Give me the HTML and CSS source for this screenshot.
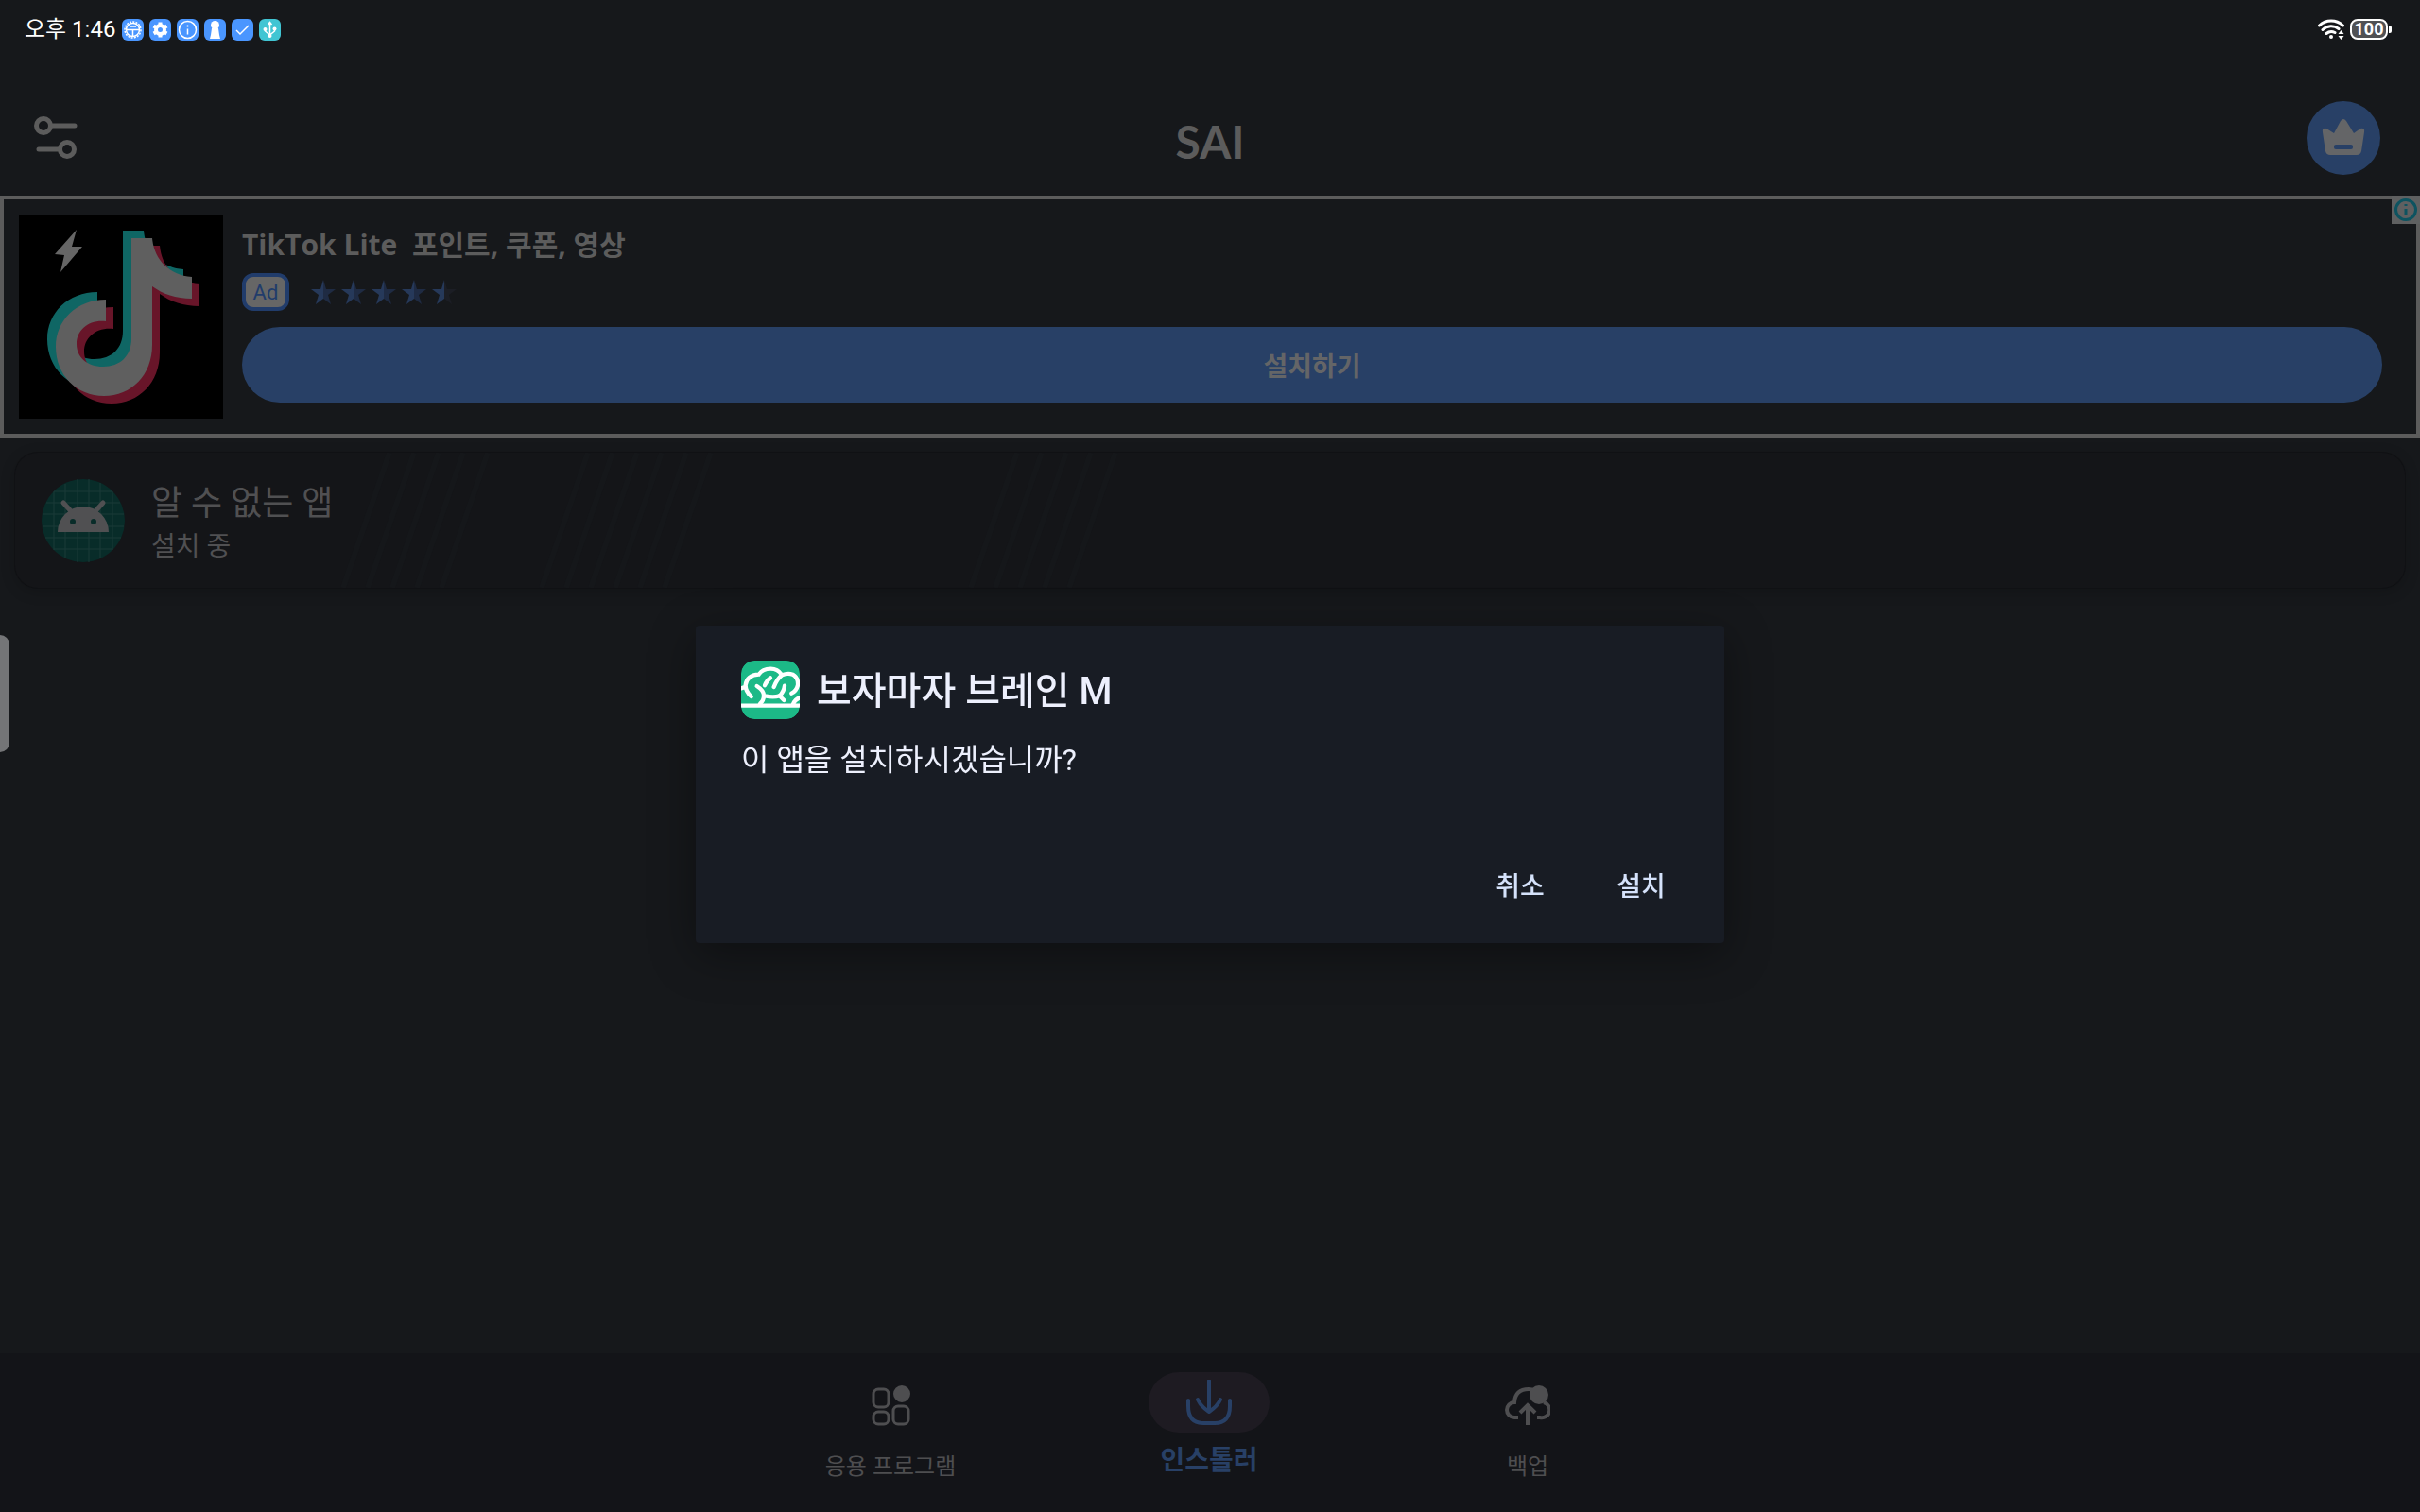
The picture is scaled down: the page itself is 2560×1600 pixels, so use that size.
FILE: index.html
```html
<!doctype html>
<html lang="ko">
<head>
    <meta charset="UTF-8">
    <meta name="viewport" content="width=device-width, initial-scale=1.0">
    <title>SAI</title>
    <link rel="stylesheet" href="styles.css">
</head>
<body>
<div class="statusBar">
    <div class="statusLeft">
        <span class="clock">오후 1:46</span>
        <svg class="chip" viewBox="0 0 23 23"><rect width="23" height="23" rx="6"/><circle cx="11.500" cy="11.500" r="8.500" class="line" stroke-width="2" stroke-dasharray="2 1.300"/><circle cx="11.500" cy="11.500" r="7" class="line"/><path class="line" d="M5 11.500h13M11.500 12v6M8 8h7"/></svg>
        <svg class="chip" viewBox="0 0 23 23"><rect width="23" height="23" rx="6"/><circle cx="11.500" cy="11.500" r="4.500" class="gear"/><path class="gear" d="M11.500 3.500v3M11.500 16.500v3M4.600 7.500l2.600 1.500M15.800 14l2.600 1.500M4.600 15.500l2.600-1.500M15.800 9l2.600-1.500"/></svg>
        <svg class="chip" viewBox="0 0 23 23"><rect width="23" height="23" rx="6"/><circle cx="11.500" cy="11.500" r="9" class="line"/><path class="line" stroke-width="2" d="M11.500 10.500v6M11.500 6.500v2"/></svg>
        <svg class="chip" viewBox="0 0 23 23"><rect width="23" height="23" rx="6"/><circle cx="11.500" cy="6.500" r="4.500" class="solid"/><path class="solid" d="M8 10h7l1 7 1 4H6l1-4z"/></svg>
        <svg class="chip" viewBox="0 0 23 23"><rect width="23" height="23" rx="6"/><path class="line" d="M5 12l4 4 9-9"/></svg>
        <svg class="chip usb" viewBox="0 0 23 23"><rect width="23" height="23" rx="6"/><path class="line" d="M11.500 4v15M6.500 11v2l5 4 5-4v-3M9.500 6l2-2.500 2 2.500"/><circle cx="6.500" cy="11" r="2" class="solid"/><circle cx="16.500" cy="10.500" r="2" class="solid"/><circle cx="11.500" cy="18" r="2" class="solid"/></svg>
    </div>
    <div class="statusRight">
        <svg class="wifi" viewBox="0 0 28 22"><path d="M1.500 7a18 18 0 0 1 25 0M5 11.500a13 13 0 0 1 17-1M9 15.500a8 8 0 0 1 9-1"/><circle cx="14" cy="19" r="2"/><path class="arrows" d="M21.500 16l3-4 3 4zM21.500 18l3 4 3-4z"/></svg>
        <div class="battery">100</div>
    </div>
</div>

<header class="appBar">
    <button class="settings" aria-label="설정">
        <svg viewBox="0 0 46 46"><circle cx="10" cy="10" r="7.500"/><path d="M18 10h25M5 35h22"/><circle cx="35" cy="35" r="7.500"/></svg>
    </button>
    <h1>SAI</h1>
    <button class="premium" aria-label="프리미엄">
        <svg viewBox="0 0 78 78"><path d="M17 33q-1-5 4-4l8 5 7-13q3-4 6 0l8 13 7-5q5-1 4 4l-3 20q-1 4-5 4H25q-4 0-5-4z"/><rect x="29" y="46" width="20" height="5" rx="2" class="slot"/></svg>
    </button>
</header>

<section class="adBanner">
    <svg class="adLogo" viewBox="0 0 216 216">
        <defs>
            <path id="note" d="M119 25h22c2 22 17 39 42 41v23c-17 0-31-5-42-13v62c0 32-22 54-51 54s-51-22-51-52c0-28 22-50 53-50v23c-18-2-31 9-31 24 0 14 11 24 28 24 18 0 30-11 30-30z"/>
        </defs>
        <rect width="216" height="216"/>
        <use href="#note" x="-9" y="-8" fill="#0f6664"/>
        <use href="#note" x="8" y="8" fill="#681529"/>
        <use href="#note" fill="#5f5f5f"/>
        <path fill="#666" d="M61 16L38 42l10 1-4 18 23-27H56z"/>
    </svg>
    <div class="adBody">
        <div class="adTitle">TikTok Lite&nbsp; 포인트, 쿠폰, 영상</div>
        <div class="adMeta">
            <span class="adTag">Ad</span>
            <svg class="stars" viewBox="0 0 154 26">
                <defs>
                    <path id="starLeft" d="M13 0v20l-8 6 3-10-8-6h10z"/>
                    <path id="starRight" d="M13 0v20l8 6-3-10 8-6H16z"/>
                </defs>
                <use href="#starLeft" x="0"/><use href="#starRight" x="0" class="shade"/>
                <use href="#starLeft" x="32"/><use href="#starRight" x="32" class="shade"/>
                <use href="#starLeft" x="64"/><use href="#starRight" x="64" class="shade"/>
                <use href="#starLeft" x="96"/><use href="#starRight" x="96" class="shade"/>
                <use href="#starLeft" x="128"/><use href="#starRight" x="128" class="off"/>
            </svg>
        </div>
        <button class="adInstall">설치하기</button>
    </div>
    <svg class="adInfo" viewBox="0 0 30 30"><circle cx="15" cy="15" r="10.500"/><path d="M15 14v7M15 9v2"/></svg>
</section>

<main>
    <article class="appCard">
        <svg class="stripes" viewBox="0 0 1260 143">
            <path d="M396 0l-49 143M422 0l-49 143M448 0l-49 143M474 0l-49 143M500 0l-49 143M606 0l-49 143M632 0l-49 143M658 0l-49 143M684 0l-49 143M710 0l-49 143M736 0l-49 143M1060 0l-49 143M1086 0l-49 143M1112 0l-49 143M1138 0l-49 143M1164 0l-49 143"/>
        </svg>
        <svg class="appIcon" viewBox="0 0 88 88">
            <circle cx="44" cy="44" r="44" fill="#082c29"/>
            <path class="grid" d="M13 13v62M25 5v78M38 0v88M50 0v88M62 4v80M75 13v62M13 13h62M5 25h78M1 37h86M1 50h86M4 62h80M13 74h62"/>
            <path class="antenna" d="M23 25l9 10M65 25l-9 10"/>
            <path fill="#505052" d="M17 56a27 27 0 0 1 54 0z"/>
            <circle cx="33" cy="45" r="3" fill="#082c29"/>
            <circle cx="55" cy="45" r="3" fill="#082c29"/>
        </svg>
        <div class="appText">
            <div class="appName">알 수 없는 앱</div>
            <div class="appState">설치 중</div>
        </div>
    </article>
</main>

<nav class="bottomNav">
    <a href="#apps" class="navItem">
        <span class="navIcon">
            <svg viewBox="0 0 48 48"><rect x="6" y="6" width="16" height="19" rx="5"/><rect x="6" y="30" width="16" height="13" rx="5"/><rect x="27" y="24" width="16" height="19" rx="5"/><circle cx="36" cy="11" r="9" class="dot"/></svg>
        </span>
        <span class="navLabel">응용 프로그램</span>
    </a>
    <a href="#installer" class="navItem active">
        <span class="navIcon">
            <svg viewBox="0 0 48 48"><path d="M24 1v33M12 21q3 7 12 13q9-6 12-13M2 22v6q0 18 16 18h12q16 0 16-18v-6"/></svg>
        </span>
        <span class="navLabel">인스톨러</span>
    </a>
    <a href="#backup" class="navItem">
        <span class="navIcon">
            <svg viewBox="0 0 48 48"><path class="thick" d="M14 36h-4a8 8 0 0 1 0-16q1-14 15-14q7 0 11 6M34 36h3a8 8 0 0 0 4-16M24 44V25M16 31l8-8 8 8"/><circle cx="36" cy="12" r="10" class="dot"/></svg>
        </span>
        <span class="navLabel">백업</span>
    </a>
</nav>

<div class="edgeHandle"></div>

<div class="dialogLayer">
    <div class="dialog" role="dialog" aria-labelledby="dialogTitle">
        <div class="dialogHead">
            <svg class="dialogIcon" viewBox="0 0 186 186">
                <rect width="186" height="186" rx="42" fill="#1cb987"/>
                <path d="M0 88l12-4M32 114q-18-16-18-36q4-32 42-34q12-18 38-18q22 0 34 18"/>
                <path d="M93 55q-12 8-18 24M50 81q22 14 22 30q0 16-12 26M76 112q26 6 46 0l14 14"/>
                <path d="M104 84q10-26 26-38q18-8 34-2q18 10 16 34q-4 18-20 26M138 80q-2 18-16 32M165 138q6-14 21-20"/>
                <path d="M0 143h186"/>
            </svg>
            <h2 id="dialogTitle">보자마자 브레인 M</h2>
        </div>
        <p>이 앱을 설치하시겠습니까?</p>
        <div class="dialogActions">
            <button>취소</button>
            <button>설치</button>
        </div>
    </div>
</div>
</body>
</html>
```

FILE: styles.css
```css
* {
    box-sizing: border-box;
}

body {
    display: flex;
    flex-direction: column;
    min-height: 100vh;
    margin: 0;
    background: #16181b;
    color: #5c5c5c;
    font-family: Roboto, "Noto Sans CJK KR", sans-serif;
}

button {
    padding: 0;
    border: none;
    background: none;
    color: inherit;
    font-family: inherit;
    cursor: pointer;
}

svg {
    display: block;
    flex: none;
}

/* status bar */
.statusBar {
    display: flex;
    justify-content: space-between;
    align-items: center;
    height: 62px;
    padding: 0 30px 0 26px;
    color: #fff;
}

.statusLeft,
.statusRight {
    display: flex;
    align-items: center;
    gap: 6px;
}

.clock {
    margin-right: 1px;
    font-size: 24px;
    line-height: 32px;
}

.chip {
    width: 23px;
    height: 23px;
    fill: #4a96ff;
}

.chip.usb {
    fill: #41c5d3;
}

.chip .line {
    fill: none;
    stroke: #fff;
    stroke-width: 1.500;
}

.chip .gear {
    fill: none;
    stroke: #fff;
    stroke-width: 4;
}

.chip .solid {
    fill: #fff;
}

.wifi {
    width: 28px;
    height: 22px;
    fill: none;
    stroke: #fff;
    stroke-width: 3;
    stroke-linecap: round;
}

.wifi circle,
.wifi .arrows {
    fill: #fff;
    stroke: none;
}

.battery {
    position: relative;
    width: 40px;
    height: 22px;
    margin-right: 4px;
    border: 2px solid #fff;
    border-radius: 8px;
    background: #505154;
    font-size: 18px;
    font-weight: 700;
    line-height: 18px;
    text-align: center;
}

.battery::after {
    content: "";
    position: absolute;
    top: 5px;
    right: -6px;
    width: 3px;
    height: 8px;
    border-radius: 0 2px 2px 0;
    background: #fff;
}

/* app bar */
.appBar {
    display: flex;
    justify-content: space-between;
    align-items: center;
    height: 145px;
    padding: 45px 42px 22px 36px;
}

.settings svg {
    width: 46px;
    height: 46px;
    fill: none;
    stroke: #5c5c5c;
    stroke-width: 5;
    stroke-linecap: round;
}

.settings {
    width: 84px;
}

h1 {
    margin: 8px 0 0;
    font-family: Lato, sans-serif;
    font-size: 48px;
    font-weight: 700;
    line-height: 56px;
}

.premium {
    width: 78px;
    height: 78px;
    border-radius: 50%;
    background: #284066;
}

.premium svg {
    fill: #646567;
}

.premium .slot {
    fill: #284066;
}

/* ad */
.adBanner {
    position: relative;
    display: flex;
    gap: 20px;
    padding: 16px 36px 16px 16px;
    border: 4px solid #5c5c5c;
}

.adLogo {
    width: 216px;
    height: 216px;
}

.adBody {
    flex: 1;
    display: flex;
    flex-direction: column;
    padding-top: 12px;
}

.adTitle {
    font-family: "Open Sans", "Noto Sans CJK KR", sans-serif;
    font-size: 30px;
    font-weight: 700;
    line-height: 40px;
}

.adMeta {
    display: flex;
    align-items: center;
    gap: 23px;
    margin: 10px 0 17px;
}

.adTag {
    width: 50px;
    height: 40px;
    border: 4px solid #213c6b;
    border-radius: 12px;
    background: #666;
    color: #213c6b;
    font-size: 22px;
    line-height: 34px;
    text-align: center;
}

.stars {
    width: 154px;
    height: 26px;
    fill: #26395a;
}

.stars .shade {
    fill: #1f2b43;
}

.stars .off {
    fill: #1c1e25;
}

.adInstall {
    height: 80px;
    border-radius: 40px;
    background: #284066;
    color: #646567;
    font-size: 28px;
    font-weight: 700;
}

.adInfo {
    position: absolute;
    top: -4px;
    right: -4px;
    width: 30px;
    height: 30px;
    background: #5f6061;
    fill: none;
    stroke: #0d5360;
    stroke-width: 3;
}

/* queue */
main {
    flex: 1;
    padding: 16px;
}

.appCard {
    position: relative;
    display: flex;
    align-items: center;
    gap: 28px;
    height: 143px;
    padding: 0 28px;
    border-radius: 24px;
    background: #141518;
    box-shadow: 0 0 0 1px #101114, 0 4px 16px #00000030;
    overflow: hidden;
}

.stripes {
    position: absolute;
    top: 0;
    left: 0;
    width: 1260px;
    height: 143px;
    stroke: #15171a;
    stroke-width: 6;
}

.appIcon,
.appText {
    position: relative;
}

.appIcon {
    width: 88px;
    height: 88px;
}

.appIcon .grid {
    fill: none;
    stroke: #1a3b39;
}

.appIcon .antenna {
    stroke: #505052;
    stroke-width: 5;
    stroke-linecap: round;
}

.appText {
    padding-top: 4px;
    color: #505052;
}

.appName {
    font-size: 36px;
    line-height: 52px;
}

.appState {
    font-size: 28px;
    line-height: 40px;
}

/* bottom navigation */
.bottomNav {
    display: flex;
    justify-content: center;
    height: 168px;
    padding: 20px 2px 0 0;
    background: #131418;
}

.navItem {
    display: flex;
    flex-direction: column;
    align-items: center;
    width: 337px;
    color: #4e4e50;
    text-decoration: none;
}

.navIcon {
    display: flex;
    justify-content: center;
    align-items: center;
    width: 128px;
    height: 64px;
    padding-top: 8px;
    border-radius: 32px;
}

.navIcon svg {
    width: 48px;
    height: 48px;
    fill: none;
    stroke: currentColor;
    stroke-width: 3;
}

.navIcon .thick {
    stroke-width: 4;
}

.navIcon .dot {
    fill: currentColor;
    stroke: none;
}

.navLabel {
    margin-top: 18px;
    font-size: 24px;
    line-height: 36px;
}

.active {
    color: #284066;
}

.active .navIcon {
    padding: 0;
    background: #1e1b22;
}

.active .navIcon svg {
    stroke-width: 4;
    stroke-linecap: round;
    stroke-linejoin: round;
}

.active .navLabel {
    margin-top: 12px;
    font-size: 28px;
    font-weight: 700;
}

.edgeHandle {
    position: fixed;
    top: 42%;
    left: 0;
    width: 10px;
    height: 124px;
    border-radius: 0 10px 10px 0;
    background: #747577;
}

/* install dialog */
.dialogLayer {
    position: fixed;
    inset: 0;
    display: flex;
    justify-content: center;
    align-items: center;
    padding-top: 60px;
}

.dialog {
    width: 1088px;
    padding: 36px 24px 22px 48px;
    border-radius: 4px;
    background: #181c24;
    box-shadow: 0 12px 48px #00000060;
    color: #edf0fd;
}

.dialogHead {
    display: flex;
    align-items: center;
    gap: 18px;
}

.dialogIcon {
    width: 62px;
    height: 62px;
    border-radius: 14px;
    fill: none;
    stroke: #fff;
    stroke-width: 13;
    stroke-linecap: round;
}

.dialogIcon rect {
    stroke: none;
}

h2 {
    margin: 0;
    padding-top: 4px;
    font-size: 40px;
    font-weight: 500;
    line-height: 60px;
}

.dialog p {
    margin: 18px 0 68px;
    font-size: 32px;
    line-height: 48px;
}

.dialogActions {
    display: flex;
    justify-content: flex-end;
}

.dialogActions button {
    width: 128px;
    height: 80px;
    color: #d5e2fb;
    font-size: 28px;
    font-weight: 500;
}
```
